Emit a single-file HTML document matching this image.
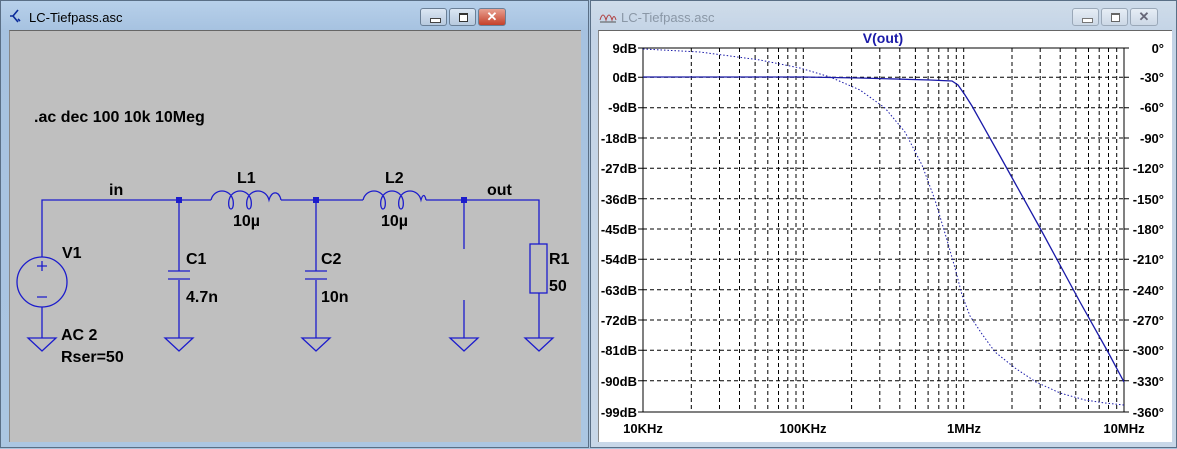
<!DOCTYPE html>
<html><head><style>
body{margin:0;width:1177px;height:448px;overflow:hidden;background:#a9c3dd;font-family:"Liberation Sans",sans-serif}
.win{position:absolute;top:0;height:448px;border:1px solid #5a6f86;box-sizing:border-box}
.t{position:absolute;font:13px "Liberation Sans",sans-serif}
.btn{position:absolute;top:7px;height:18px;border:1px solid #6a7f96;border-radius:3px;box-sizing:border-box}
</style></head><body>
<div class="win" style="left:0;width:589px;background:linear-gradient(#b7d0ea,#a6c2e0 30px,#abc6e2)">
 <div class="t" style="left:28px;top:9px;color:#000">LC-Tiefpass.asc</div>
 <svg style="position:absolute;left:8px;top:7px" width="16" height="16"><path d="M9 2 L4 8 L9 14 M4 8 L1 8 M9 11 L11 13" stroke="#0a2a9a" stroke-width="1.6" fill="none"/></svg>
 <div class="btn" style="left:419px;width:27px;background:linear-gradient(#dbe6f3,#b7c9de)"><div style="position:absolute;left:9px;top:9px;width:9px;height:3px;background:#fff;border:1px solid #444"></div></div>
 <div class="btn" style="left:448px;width:27px;background:linear-gradient(#dbe6f3,#b7c9de)"><div style="position:absolute;left:9px;top:4px;width:7px;height:6px;border:1px solid #333;border-top-width:2px;background:#fff"></div></div>
 <div class="btn" style="left:477px;width:28px;background:linear-gradient(#e8a090,#c4402a);color:#fff;font:bold 13px sans-serif;text-align:center;line-height:15px">✕</div>
 <div style="position:absolute;left:8px;top:29px;width:498px;height:411px;background:#bfbfbf;border-top:1px solid #666;border-left:1px solid #888"></div>
 <div style="position:absolute;left:506px;top:29px;width:74px;height:411px;background:#bfbfbf;border-top:1px solid #666"></div>
 <svg style="position:absolute;left:0;top:0" width="589" height="448">
  <g stroke="#1c1ccc" stroke-width="1.3" fill="none">
   <path d="M41 256 V199 H210 M280 199 H362 M425 199 H538 V243 M178 199 V270 M178 279 V337 M315 199 V270 M315 279 V337 M463 199 V248 M463 299 V337 M538 292 V337 M41 306 V337"/>
   <path d="M167 270 H189 M167 278 H189 M304 270 H326 M304 278 H326"/>
   <circle cx="41" cy="281" r="25"/>
   <path d="M36 265 H46 M41 260 V270 M36 296 H46"/>
   <rect x="529" y="243" width="17" height="49"/>
   <path d="M27 337 H55 L41 350 Z M164 337 H192 L178 350 Z M301 337 H329 L315 350 Z M449 337 H477 L463 350 Z M524 337 H552 L538 350 Z"/>
   <path d="M210 199 C213 187 229 187 232 199 C234 211 226 211 228 199 C231 187 247 187 250 199 C252 211 244 211 246 199 C249 187 265 187 268 199 C271 189 278 190 280 199"/>
   <path d="M362 199 C365 187 381 187 384 199 C386 211 378 211 380 199 C383 187 399 187 402 199 C404 211 396 211 398 199 C401 187 417 187 420 199 C422 192 424 194 425 199"/>
  </g>
  <g fill="#1c1ccc"><rect x="175" y="196" width="6" height="6"/><rect x="312" y="196" width="6" height="6"/><rect x="460" y="196" width="6" height="6"/></g>
  <g font-family="Liberation Sans" font-weight="bold" font-size="16" fill="#000">
   <text x="33" y="121">.ac dec 100 10k 10Meg</text>
   <text x="108" y="194">in</text><text x="486" y="194">out</text>
   <text x="236" y="182">L1</text><text x="232" y="225">10µ</text>
   <text x="384" y="182">L2</text><text x="380" y="225">10µ</text>
   <text x="61" y="257">V1</text>
   <text x="185" y="263">C1</text><text x="185" y="301">4.7n</text>
   <text x="320" y="263">C2</text><text x="320" y="301">10n</text>
   <text x="548" y="263">R1</text><text x="548" y="290">50</text>
   <text x="60" y="339">AC 2</text><text x="60" y="361">Rser=50</text>
  </g>
 </svg>
</div>
<div class="win" style="left:590px;width:587px;background:linear-gradient(#cfdcea,#c4d4e6 30px,#c8d7e8)">
 <div class="t" style="left:30px;top:9px;color:#8a97a6">LC-Tiefpass.asc</div>
 <svg style="position:absolute;left:8px;top:7px" width="18" height="16"><path d="M1 12 Q4 2 7 12 Q10 2 13 12 Q15 5 17 12" stroke="#b04040" fill="none"/><path d="M1 14 H17" stroke="#555"/></svg>
 <div class="btn" style="left:481px;width:27px;border-color:#9aa8b8;background:linear-gradient(#e6edf5,#ccd8e6)"><div style="position:absolute;left:9px;top:9px;width:9px;height:3px;background:#fff;border:1px solid #777"></div></div>
 <div class="btn" style="left:510px;width:27px;border-color:#9aa8b8;background:linear-gradient(#e6edf5,#ccd8e6)"><div style="position:absolute;left:9px;top:4px;width:7px;height:6px;border:1px solid #666;border-top-width:2px;background:#fff"></div></div>
 <div class="btn" style="left:539px;width:28px;border-color:#9aa8b8;background:linear-gradient(#e6edf5,#ccd8e6);color:#667;font:bold 13px sans-serif;text-align:center;line-height:15px">✕</div>
 <div style="position:absolute;left:7px;top:29px;width:573px;height:411px;background:#fff;border-top:1px solid #666;border-left:1px solid #888"></div>
</div>
<svg style="position:absolute;left:0;top:0" width="1177" height="448">
 <g id="grid" stroke="#000" stroke-width="1" stroke-dasharray="4,3">
  <path d="M643 77.3H1124M643 107.7H1124M643 138H1124M643 168.3H1124M643 198.7H1124M643 229H1124M643 259.3H1124M643 289.7H1124M643 320H1124M643 350.3H1124M643 380.7H1124"/>
  <path d="M691.3 48V412M719.5 48V412M739.5 48V412M755.1 48V412M767.8 48V412M778.5 48V412M787.8 48V412M796 48V412M803.3 48V412M851.6 48V412M879.8 48V412M899.8 48V412M915.4 48V412M928.1 48V412M938.8 48V412M948.1 48V412M956.3 48V412M963.7 48V412M1012 48V412M1040.2 48V412M1060.2 48V412M1075.8 48V412M1088.5 48V412M1099.2 48V412M1108.5 48V412M1116.7 48V412"/>
 </g>
 <g stroke="#000" stroke-width="1" fill="none">
  <path d="M643 48V412H1124V48H643"/>
  <path d="M638 48H643M638 77.3H643M638 107.7H643M638 138H643M638 168.3H643M638 198.7H643M638 229H643M638 259.3H643M638 289.7H643M638 320H643M638 350.3H643M638 380.7H643M638 412H643"/>
  <path d="M1124 48H1129M1124 77.3H1129M1124 107.7H1129M1124 138H1129M1124 168.3H1129M1124 198.7H1129M1124 229H1129M1124 259.3H1129M1124 289.7H1129M1124 320H1129M1124 350.3H1129M1124 380.7H1129M1124 412H1129"/>
 </g>
 <path d="M643 77H803L860 78L930 80L952 81L958 85L965 95L972 106L1000 156L1040 228L1080 302L1108 352L1124 382" stroke="#1a1aa8" stroke-width="1.3" fill="none"/>
 <path d="M643 49L700 52L760 60L800 68L830 77L860 90L885 108L905 132L922 165L935 200L947 240L955 268L962 295L970 316L982 334L995 352L1015 368L1036 382L1060 393L1085 400L1105 403L1124 405" stroke="#1a1aa8" stroke-width="1" stroke-dasharray="1.5,2" fill="none"/>
 <g font-family="Liberation Sans" font-weight="bold" font-size="13" fill="#000">
  <text x="883" y="43" fill="#1a1aa8" font-size="14" text-anchor="middle">V(out)</text>
  <g text-anchor="end">
   <text x="637" y="53">9dB</text><text x="637" y="82">0dB</text><text x="637" y="112">-9dB</text><text x="637" y="143">-18dB</text><text x="637" y="173">-27dB</text><text x="637" y="204">-36dB</text><text x="637" y="234">-45dB</text><text x="637" y="264">-54dB</text><text x="637" y="295">-63dB</text><text x="637" y="325">-72dB</text><text x="637" y="355">-81dB</text><text x="637" y="386">-90dB</text><text x="637" y="417">-99dB</text>
   <text x="1164" y="53">0°</text><text x="1164" y="82">-30°</text><text x="1164" y="112">-60°</text><text x="1164" y="143">-90°</text><text x="1164" y="173">-120°</text><text x="1164" y="204">-150°</text><text x="1164" y="234">-180°</text><text x="1164" y="264">-210°</text><text x="1164" y="295">-240°</text><text x="1164" y="325">-270°</text><text x="1164" y="355">-300°</text><text x="1164" y="386">-330°</text><text x="1164" y="417">-360°</text>
  </g>
  <g text-anchor="middle"><text x="643" y="433">10KHz</text><text x="803" y="433">100KHz</text><text x="964" y="433">1MHz</text><text x="1124" y="433">10MHz</text></g>
 </g>
</svg>
</body></html>
